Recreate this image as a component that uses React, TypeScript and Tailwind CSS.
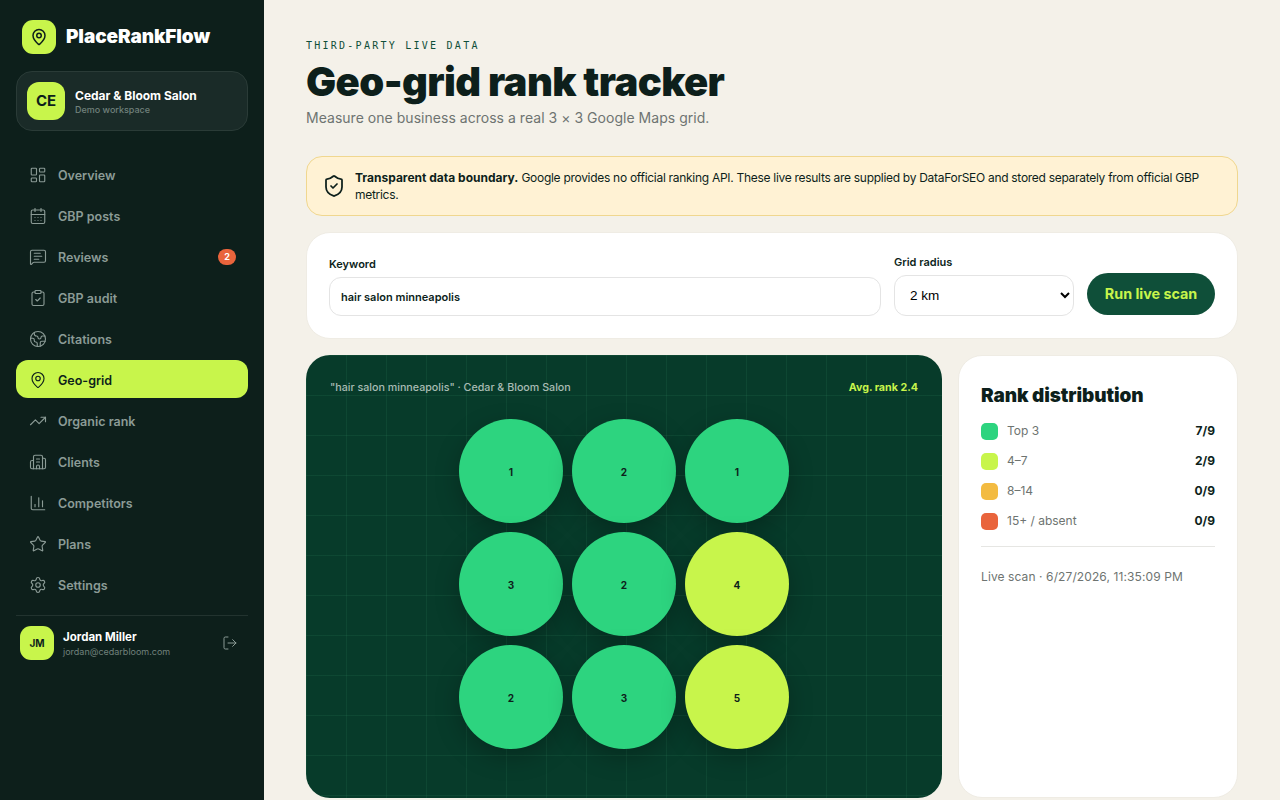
import React from 'react';
import {
  Building2,
  CalendarDays,
  ChartColumn,
  ClipboardCheck,
  Earth,
  LayoutDashboard,
  LogOut,
  MapPin,
  MessageSquareText,
  Settings,
  ShieldCheck,
  Star,
  TrendingUp,
} from 'lucide-react';

const navItems = [
  { label: 'Overview', icon: LayoutDashboard },
  { label: 'GBP posts', icon: CalendarDays },
  { label: 'Reviews', icon: MessageSquareText, badge: '2' },
  { label: 'GBP audit', icon: ClipboardCheck },
  { label: 'Citations', icon: Earth },
  { label: 'Geo-grid', icon: MapPin, active: true },
  { label: 'Organic rank', icon: TrendingUp },
  { label: 'Clients', icon: Building2 },
  { label: 'Competitors', icon: ChartColumn },
  { label: 'Plans', icon: Star },
  { label: 'Settings', icon: Settings },
];

const ranks = [1, 2, 1, 3, 2, 4, 2, 3, 5];

const legend = [
  { label: 'Top 3', value: '7/9', color: 'bg-[#2dd47f]' },
  { label: '4–7', value: '2/9', color: 'bg-[#c8f54b]' },
  { label: '8–14', value: '0/9', color: 'bg-[#f3bb41]' },
  { label: '15+ / absent', value: '0/9', color: 'bg-[#e9643c]' },
];

const Sidebar = () => (
  <aside className="w-[264px] shrink-0 h-screen bg-[#0d1f1b] px-4 pt-5 flex flex-col">
    <div className="flex items-center gap-2.5 pl-1.5 h-[34px]">
      <div className="w-[34px] h-[34px] rounded-[11px] bg-[#c8f54b] flex items-center justify-center text-[#0d1f1b]">
        <MapPin size={18} strokeWidth={2} />
      </div>
      <span className="text-[19px] font-black text-white tracking-[-0.1px]">PlaceRankFlow</span>
    </div>

    <div className="mt-[17px] h-[60px] rounded-2xl border border-[#2a3b37] bg-[#1a2b28] px-2.5 flex items-center gap-2.5">
      <div className="w-[38px] h-[38px] rounded-xl bg-[#c8f54b] flex items-center justify-center text-[15px] font-bold text-[#0d1f1b]">
        CE
      </div>
      <div className="min-w-0 pt-[2px]">
        <div className="text-[12px] leading-[15px] font-bold text-white">Cedar &amp; Bloom Salon</div>
        <div className="text-[9px] leading-[13px] font-medium text-[#71817c]">Demo workspace</div>
      </div>
    </div>

    <nav className="mt-6 flex flex-col gap-[3px]">
      {navItems.map(({ label, icon: Icon, badge, active }) => (
        <div
          key={label}
          className={
            active
              ? 'h-[38px] rounded-xl bg-[#c8f54b] pl-[13px] pr-3 pt-[2px] flex items-center gap-[11px] text-[#0d1f1b]'
              : 'h-[38px] rounded-xl pl-[13px] pr-3 pt-[2px] flex items-center gap-[11px] text-[#8b9b96]'
          }
        >
          <Icon size={18} strokeWidth={1.5} />
          <span className="text-[12.5px] font-semibold flex-1 pt-[2px]">{label}</span>
          {badge && (
            <span className="w-[18px] h-[16px] rounded-full bg-[#e9643c] text-white text-[9px] font-bold flex items-center justify-center">
              {badge}
            </span>
          )}
        </div>
      ))}
    </nav>

    <div className="mt-3 border-t border-[#22332f] pt-2.5 pl-1 pr-2.5 flex items-center">
      <div className="w-[34px] h-[34px] rounded-[11px] bg-[#c8f54b] flex items-center justify-center text-[10px] font-bold text-[#0d1f1b]">
        JM
      </div>
      <div className="ml-[9px] flex-1 min-w-0 pt-[2px]">
        <div className="text-[11.5px] leading-[15px] font-bold text-white">Jordan Miller</div>
        <div className="text-[9px] leading-[13px] text-[#71817c]">jordan@cedarbloom.com</div>
      </div>
      <LogOut size={16} strokeWidth={1.5} className="text-[#8b9b96]" />
    </div>
  </aside>
);

const ScanForm = () => (
  <div className="mt-4 h-[107px] rounded-3xl bg-white border border-[#efece4] px-[22px] pb-[22px] flex items-end gap-[13px]">
    <label className="flex-1 min-w-0 block">
      <span className="block text-[11px] leading-[14px] font-semibold text-[#0d1f1b] mb-1.5">Keyword</span>
      <input
        readOnly
        value="hair salon minneapolis"
        className="w-full h-[39px] rounded-xl border border-[#e4e4e4] bg-white px-[11px] text-[11px] font-semibold text-[#0d1f1b] outline-none"
      />
    </label>
    <label className="w-[180px] shrink-0 block">
      <span className="block text-[11px] leading-[14px] font-semibold text-[#0d1f1b] mb-1.5">Grid radius</span>
      <select className="w-full h-[41px] rounded-xl border border-[#e4e4e4] bg-white px-[11px] text-[13.5px] text-black [font-family:'Liberation_Sans',sans-serif] outline-none">
        <option>2 km</option>
        <option>5 km</option>
      </select>
    </label>
    <button className="w-[128px] h-[42px] mb-px shrink-0 rounded-full bg-[#0f4f39] text-[#c8f54b] text-[14.3px] font-bold">
      Run live scan
    </button>
  </div>
);

const GridPanel = () => (
  <div className="h-[443px] rounded-[24px] bg-[#073b2a] bg-[linear-gradient(rgba(100,220,150,0.08)_1px,transparent_1px),linear-gradient(90deg,rgba(100,220,150,0.08)_1px,transparent_1px)] bg-[size:40px_40px] px-6 pt-6">
    <div className="h-4 pt-[2px] flex items-center justify-between text-[10.7px] font-medium">
      <span className="text-[#a9bcb4]">"hair salon minneapolis" · Cedar &amp; Bloom Salon</span>
      <span className="font-bold text-[#c8f54b]">Avg. rank 2.4</span>
    </div>
    <div className="mt-6 grid grid-cols-[104px_104px_104px] gap-[9px] justify-center">
      {ranks.map((rank, i) => (
        <div
          key={i}
          className={
            rank > 3
              ? 'h-[104px] pt-[2px] rounded-full bg-[#c8f54b] flex items-center justify-center text-[10px] font-bold text-[#0d1f1b] shadow-[0_8px_24px_rgba(0,0,0,0.25)]'
              : 'h-[104px] pt-[2px] rounded-full bg-[#2dd47f] flex items-center justify-center text-[10px] font-bold text-[#0d1f1b] shadow-[0_8px_24px_rgba(0,0,0,0.25)]'
          }
        >
          {rank}
        </div>
      ))}
    </div>
  </div>
);

const Distribution = () => (
  <div className="h-[443px] rounded-[24px] bg-white border border-[#efece4] px-[22px] pt-[28px]">
    <h2 className="text-[19px] leading-[24px] font-black text-[#0d1f1b] tracking-[-0.1px]">Rank distribution</h2>
    <div className="mt-[14px] flex flex-col gap-3">
      {legend.map((row) => (
        <div key={row.label} className="h-[18px] flex items-center text-[12px]">
          <span className={`w-[17px] h-[17px] rounded-[5px] ${row.color}`} />
          <span className="ml-[9px] flex-1 text-[#6e7471]">{row.label}</span>
          <span className="font-bold text-[#0d1f1b]">{row.value}</span>
        </div>
      ))}
    </div>
    <div className="mt-[16px] border-t border-[#e6e6e3] pt-[21px] text-[12px] leading-[18px] tracking-[0.1px] text-[#6e7471]">
      Live scan · 6/27/2026, 11:35:09 PM
    </div>
  </div>
);

const App = () => (
  <div className="h-screen overflow-hidden flex bg-[#f4f1e9] [font-family:Inter,sans-serif]">
    <Sidebar />
    <main className="flex-1 min-w-0 px-[42px] pt-[39px]">
      <div className="text-[10px] leading-[13px] tracking-[2.25px] text-[#0f4f39] [font-family:'DejaVu_Sans_Mono',monospace]">
        THIRD-PARTY LIVE DATA
      </div>
      <h1 className="mt-[5px] text-[40px] leading-[50px] font-black text-[#0d1f1b] tracking-[-0.6px]">
        Geo-grid rank tracker
      </h1>
      <p className="mt-px text-[14px] leading-[20px] tracking-[0.03px] text-[#6e7471]">
        Measure one business across a real 3 × 3 Google Maps grid.
      </p>

      <div className="mt-7 h-[60px] rounded-2xl bg-[#fff2d4] border border-[#f0d78f] pl-[15px] pr-5 flex items-center gap-[9px] text-[12px] leading-[17px] text-[#0d1f1b]">
        <ShieldCheck size={24} strokeWidth={1.75} className="shrink-0" />
        <p className="tracking-[-0.29px]">
          <strong className="font-bold tracking-normal">Transparent data boundary.</strong> Google provides no official ranking API. These live results are supplied by DataForSEO and stored separately from official GBP metrics.
        </p>
      </div>

      <ScanForm />

      <div className="mt-4 grid grid-cols-[1fr_280px] gap-4">
        <GridPanel />
        <Distribution />
      </div>
    </main>
  </div>
);

export default App;
